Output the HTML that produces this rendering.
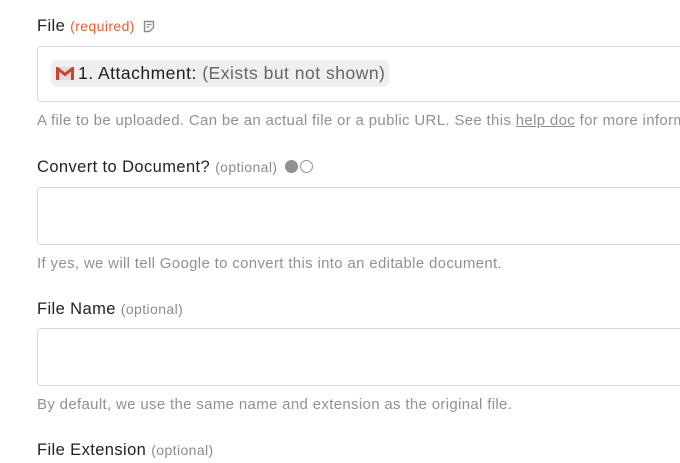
<!DOCTYPE html>
<html><head><style>
body{margin:0;width:680px;height:463px;overflow:hidden;background:#fff;font-family:"Liberation Sans",sans-serif;}
#w{position:relative;width:680px;height:463px;overflow:hidden;}
.lab{position:absolute;left:37px;font-size:16.5px;letter-spacing:0.4px;color:#222;white-space:nowrap;}
.lab small{font-size:14px;color:#8a8c8c;letter-spacing:0.4px;}
.box{position:absolute;left:37px;width:642px;border:1px solid #d8dadb;border-right:none;border-radius:4px 0 0 4px;background:#fff;}
.help{position:absolute;left:37px;width:643px;overflow:hidden;font-size:15px;letter-spacing:0.33px;color:#8f9292;white-space:nowrap;}
.pill{position:absolute;left:13px;top:13px;height:27px;width:338px;background:#efefef;border-radius:6px;font-size:17.5px;letter-spacing:0.5px;line-height:27px;color:#1f1f1f;white-space:nowrap;}
</style></head><body><div id="w">
<div class="lab" style="top:17px">File <small style="color:#f25a2c">(required)</small>
<svg width="12" height="13" viewBox="0 0 12 13" style="vertical-align:-2px;margin-left:3px"><path d="M1.5 1.5h9v6l-4 4h-5z" fill="none" stroke="#8a8c8c" stroke-width="1.4"/><path d="M3.5 4.5h5M3.5 7h3" stroke="#8a8c8c" stroke-width="1.3"/></svg></div>
<div class="box" style="top:46px;height:54px">
<div class="pill"><svg width="18" height="13" viewBox="0 0 18 13" style="margin:0 4px 0 5px;vertical-align:-1px"><rect x="0" y="0" width="18" height="13" fill="#ddd"/><path d="M1.5 13V1.5L9 7.5L16.5 1.5V13" fill="none" stroke="#d23f31" stroke-width="3"/></svg>1. Attachment: <span style="color:#666">(Exists but not shown)</span></div>
</div>
<div class="help" style="top:112px">A file to be uploaded. Can be an actual file or a public URL. See this <u>help doc</u> for more information.</div>
<div class="lab" style="top:158px">Convert to Document? <small>(optional)</small>
<span style="display:inline-block;width:13px;height:13px;border-radius:50%;background:#8f9292;vertical-align:-1px;margin-left:3px"></span><span style="display:inline-block;width:11px;height:11px;border-radius:50%;border:1.3px solid #8f9292;vertical-align:-1px;margin-left:2px"></span></div>
<div class="box" style="top:187px;height:56px"></div>
<div class="help" style="top:255px">If yes, we will tell Google to convert this into an editable document.</div>
<div class="lab" style="top:300px">File Name <small>(optional)</small></div>
<div class="box" style="top:328px;height:56px"></div>
<div class="help" style="top:396px">By default, we use the same name and extension as the original file.</div>
<div class="lab" style="top:441px">File Extension <small>(optional)</small></div>
</div></body></html>
